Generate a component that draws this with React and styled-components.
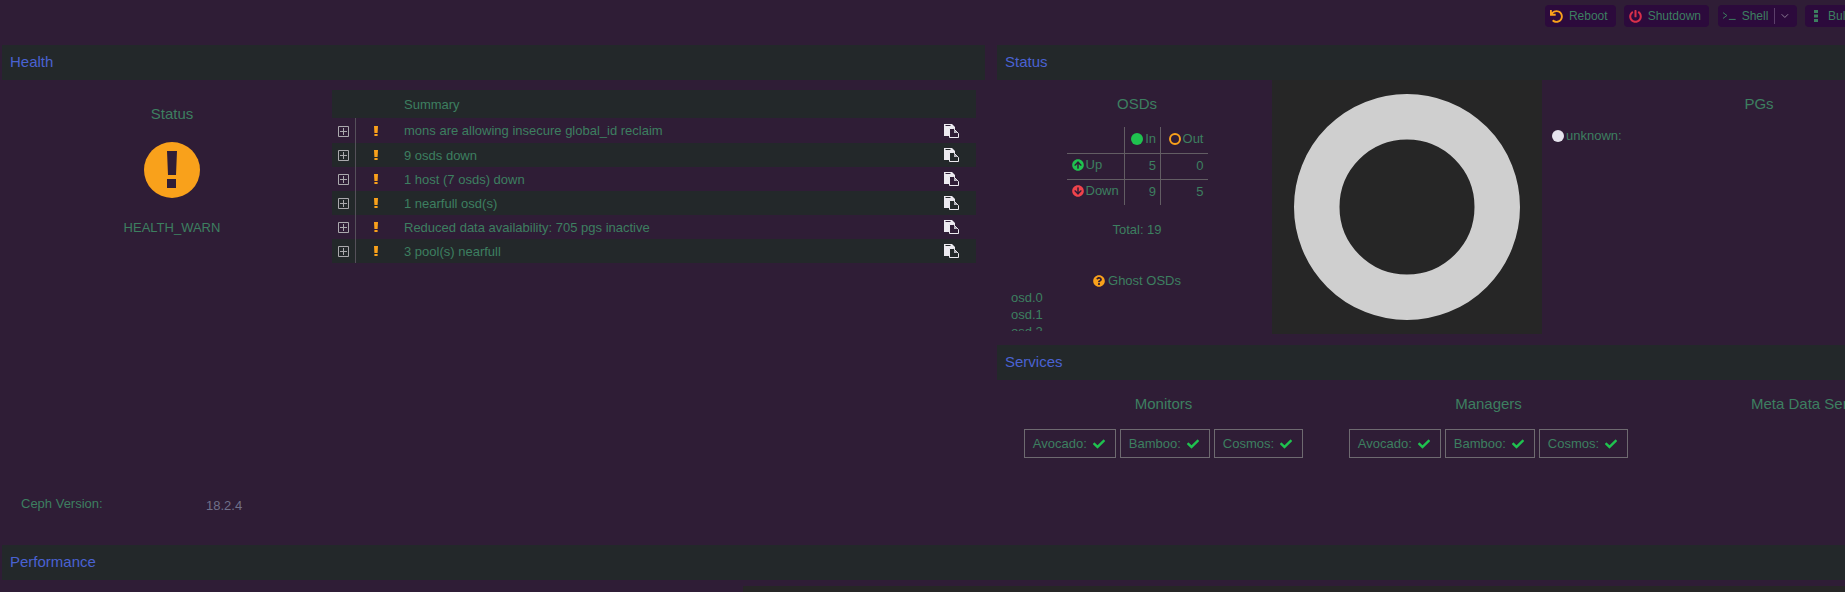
import React from "react";
import styled, { createGlobalStyle } from "styled-components";
import {
  FaUndo,
  FaPowerOff,
  FaCheck,
  FaArrowCircleUp,
  FaArrowCircleDown,
  FaQuestionCircle,
} from "react-icons/fa";
import { FiChevronDown } from "react-icons/fi";

const BG = "#2f1d36";
const BAR = "#23282a";
const GREEN = "#3d7f60";
const ORANGE = "#f9a11b";

const GlobalStyle = createGlobalStyle`
  html, body {
    margin: 0;
    height: 592px;
    overflow: hidden;
    background: ${BG};
  }
  body {
    font-family: "Liberation Sans", Arial, sans-serif;
    font-size: 13px;
    color: ${GREEN};
  }
`;

const Page = styled.div`
  width: 1981px;
  height: 592px;
  padding-left: 2px;
  overflow: hidden;
`;

const Toolbar = styled.div`
  height: 45px;
  padding-top: 5px;
  box-sizing: border-box;
  display: flex;
  justify-content: flex-end;
  gap: 8px;
`;

const ActionButton = styled.div`
  height: 22px;
  padding: ${(p) => p.$padding || "0 8px 0 5px"};
  margin-left: ${(p) => p.$offset || 0};
  display: flex;
  align-items: center;
  gap: ${(p) => p.$gap || "6px"};
  border-radius: 4px;
  background: #2c0a3c;
  font-size: 12px;
  color: ${GREEN};
  width: ${(p) => p.$width || "auto"};
  box-sizing: border-box;
`;

const ShellDivider = styled.span`
  width: 1px;
  height: 16px;
  margin-right: -2px;
  background: #5b3f6a;
`;

const Columns = styled.div`
  display: grid;
  grid-template-columns: 983px 984px;
  column-gap: 12px;
  height: 500px;
`;

const Column = styled.section`
  display: flex;
  flex-direction: column;
  min-width: 0;
`;

const SectionBar = styled.h2`
  flex: none;
  height: 35px;
  box-sizing: border-box;
  margin: ${(p) => p.$margin || 0};
  padding: 0 0 2px 8px;
  display: flex;
  align-items: center;
  background: ${BAR};
  color: #4a62d2;
  font-size: 15px;
  font-weight: 400;
`;

const HealthBody = styled.div`
  flex: 1;
  display: grid;
  grid-template-columns: 320px 644px;
  padding-left: 10px;
  align-content: start;
`;

const HealthStatus = styled.div`
  display: flex;
  flex-direction: column;
  align-items: center;
  padding-top: 24px;
`;

const PanelTitle = styled.h3`
  margin: 0;
  font-size: 15px;
  font-weight: 400;
  line-height: 19px;
  text-align: center;
`;

const StatusIcon = styled.svg`
  display: block;
  width: 56px;
  height: 56px;
  margin: 19px 0 0;
`;

const HealthLabel = styled.div`
  margin-top: 21px;
  line-height: 17px;
`;

const SummaryTable = styled.table`
  margin-top: 10px;
  width: 644px;
  border-collapse: collapse;
  table-layout: fixed;
  align-self: start;
`;

const HeadCell = styled.th`
  height: 28px;
  padding: 0 0 0 ${(p) => p.$pad || 0};
  background: ${BAR};
  text-align: left;
  font-weight: 400;
  line-height: 17px;
`;

const Row = styled.tr`
  height: 24px;
  background: ${(p) => (p.$striped ? BAR : "transparent")};
  &:first-child {
    height: 25px;
  }
`;

const Cell = styled.td`
  padding: 0 0 0 ${(p) => p.$pad || 0};
  border-right: ${(p) => (p.$rule ? "1px solid #55505a" : "none")};
  line-height: 17px;
  vertical-align: middle;
`;

const BlockIcon = styled.svg`
  display: block;
  margin: ${(p) => p.$margin || 0};
`;

const VersionLine = styled.div`
  display: flex;
  line-height: 16px;
  padding: 0 0 31px 19px;
  margin-top: auto;
`;

const VersionLabel = styled.span`
  width: 185px;
`;

const VersionValue = styled.span`
  color: #70708a;
  margin-top: 2px;
`;

const StatusGrid = styled.div`
  height: 254px;
  flex: none;
  display: grid;
  grid-template-columns: 275px 270px 1fr;
  grid-template-rows: 254px;
`;

const OsdPanel = styled.div`
  padding: 14px 0 0 5px;
  display: flex;
  flex-direction: column;
  align-items: center;
  min-width: 0;
  min-height: 0;
  overflow: hidden;
`;

const OsdTable = styled.table`
  margin-top: 14px;
  border-collapse: collapse;
  width: 141px;
  table-layout: fixed;
`;

const OsdRow = styled.tr`
  height: 26px;
`;

const OsdCell = styled.td`
  padding: 0 4px 0 5px;
  box-sizing: border-box;
  text-align: ${(p) => p.$align || "right"};
  white-space: nowrap;
  border: 1px solid #625d63;
  line-height: 16px;
  &:first-child {
    border-left: none;
  }
  &:last-child {
    border-right: none;
  }
  tr:first-child > & {
    border-top: none;
  }
  tr:last-child > & {
    border-bottom: none;
  }
`;

const OsdIcon = styled.span`
  display: inline-flex;
  align-items: center;
  gap: 2px;
  svg {
    color: ${(p) => p.$color};
  }
`;

const FilledDot = styled.span`
  display: inline-block;
  width: 12px;
  height: 12px;
  border-radius: 50%;
  background: ${(p) => p.$color};
`;

const RingDot = styled.span`
  display: inline-block;
  width: 12px;
  height: 12px;
  box-sizing: border-box;
  border-radius: 50%;
  border: 2px solid ${ORANGE};
`;

const Total = styled.div`
  margin-top: 16px;
  line-height: 17px;
`;

const GhostTitle = styled.div`
  margin-top: 34px;
  line-height: 17px;
  display: flex;
  align-items: center;
  gap: 3px;
  svg {
    color: ${ORANGE};
  }
`;

const GhostList = styled.div`
  align-self: stretch;
  margin-left: 9px;
  height: 42px;
  flex: none;
  overflow: hidden;
  line-height: 17px;
`;

const DonutPanel = styled.div`
  background: #262626;
  display: flex;
  align-items: center;
  justify-content: center;
`;

const PgPanel = styled.div`
  padding: 14px 15px 0 10px;
`;

const LegendItem = styled.div`
  margin-top: 14px;
  display: flex;
  align-items: center;
  gap: 2px;
  line-height: 17px;
`;

const ServicesGrid = styled.div`
  display: grid;
  grid-template-columns: repeat(3, 325px);
  padding-left: 4px;
`;

const ServiceGroup = styled.div`
  padding-top: 14px;
  display: flex;
  flex-direction: column;
  align-items: center;
`;

const NodeList = styled.div`
  margin-top: 16px;
  display: flex;
  gap: 4px;
`;

const NodeBadge = styled.div`
  height: 29px;
  padding: 0 10px 0 8px;
  box-sizing: border-box;
  display: flex;
  align-items: center;
  gap: 6px;
  border: 1px solid #6e6a70;
  white-space: nowrap;
  svg {
    color: #1fc24f;
  }
`;

const BottomPanel = styled.div`
  margin: 6px 0 0 741px;
  height: 40px;
  background: #262626;
`;

const alerts = [
  "mons are allowing insecure global_id reclaim",
  "9 osds down",
  "1 host (7 osds) down",
  "1 nearfull osd(s)",
  "Reduced data availability: 705 pgs inactive",
  "3 pool(s) nearfull",
];

const nodes = ["Avocado", "Bamboo", "Cosmos"];

function ExpandIcon() {
  return (
    <BlockIcon $margin="1px auto 0" width="11" height="11" viewBox="0 0 11 11">
      <path d="M.5.5h10v10H.5zM5.500 2v7M2 5.500h7" fill="none" stroke="#aaa9ad" />
    </BlockIcon>
  );
}

function WarnMark() {
  return (
    <BlockIcon $margin="0 auto" width="4" height="10" viewBox="0 0 4 10">
      <path d="M0 0h4l-.4 7H.4zM.4 8h3.200v2H.4z" fill={ORANGE} />
    </BlockIcon>
  );
}

function CopyIcon({ background }) {
  return (
    <BlockIcon width="15" height="14" viewBox="0 0 15 14">
      <path d="M0 0h8l3 3v9H0z" fill="#eceaf0" />
      <path d="M1.500 1.500h5" stroke={background} />
      <path d="M5.500 4.500h4l5 5v4h-9z" fill={background} stroke="#eceaf0" />
      <path d="M10 5.500v3.500h3.500z" fill="#b9b7c0" />
    </BlockIcon>
  );
}

function ShellIcon() {
  return (
    <BlockIcon width="13" height="8" viewBox="0 0 13 8">
      <path d="M0 .5l4 3-4 3M6 7.500h7" fill="none" stroke={GREEN} />
    </BlockIcon>
  );
}

function KebabIcon() {
  return (
    <BlockIcon width="4" height="12" viewBox="0 0 4 12">
      <path d="M0 0h4v3H0zM0 4.500h4v3H0zM0 9h4v3H0z" fill={GREEN} />
    </BlockIcon>
  );
}

function NodeGroup({ title, names = [] }) {
  return (
    <ServiceGroup>
      <PanelTitle>{title}</PanelTitle>
      <NodeList>
        {names.map((name) => (
          <NodeBadge key={name}>
            {name}:
            <FaCheck size={12} />
          </NodeBadge>
        ))}
      </NodeList>
    </ServiceGroup>
  );
}

export default function App() {
  return (
    <>
      <GlobalStyle />
      <Page>
        <Toolbar>
          <ActionButton>
            <FaUndo size={13} color={ORANGE} />
            Reboot
          </ActionButton>
          <ActionButton>
            <FaPowerOff size={13} color="#d8304a" />
            Shutdown
          </ActionButton>
          <ActionButton $offset="1px" $padding="0 6px 0 5px" $width="79px">
            <ShellIcon />
            Shell
            <ShellDivider />
            <FiChevronDown size={12} color="#8d7f96" />
          </ActionButton>
          <ActionButton $width="178px" $padding="0 8px 0 9px" $gap="10px">
            <KebabIcon />
            Bulk Actions
          </ActionButton>
        </Toolbar>
        <Columns>
          <Column>
            <SectionBar>Health</SectionBar>
            <HealthBody>
              <HealthStatus>
                <PanelTitle>Status</PanelTitle>
                <StatusIcon viewBox="0 0 56 56">
                  <circle cx="28" cy="28" r="28" fill={ORANGE} />
                  <path d="M23 9h10l-1 24h-8zM23 37h9v9h-9z" fill={BG} />
                </StatusIcon>
                <HealthLabel>HEALTH_WARN</HealthLabel>
              </HealthStatus>
              <SummaryTable>
                <colgroup>
                  <col width="23" />
                  <col width="41" />
                  <col />
                  <col width="32" />
                </colgroup>
                <thead>
                  <tr>
                    <HeadCell />
                    <HeadCell />
                    <HeadCell $pad="8px">Summary</HeadCell>
                    <HeadCell />
                  </tr>
                </thead>
                <tbody>
                  {alerts.map((text, i) => (
                    <Row key={text} $striped={i % 2 === 1}>
                      <Cell $rule>
                        <ExpandIcon />
                      </Cell>
                      <Cell>
                        <WarnMark />
                      </Cell>
                      <Cell $pad="8px">{text}</Cell>
                      <Cell>
                        <CopyIcon background={i % 2 === 1 ? BAR : BG} />
                      </Cell>
                    </Row>
                  ))}
                </tbody>
              </SummaryTable>
            </HealthBody>
            <VersionLine>
              <VersionLabel>Ceph Version:</VersionLabel>
              <VersionValue>18.2.4</VersionValue>
            </VersionLine>
          </Column>
          <Column>
            <SectionBar>Status</SectionBar>
            <StatusGrid>
              <OsdPanel>
                <PanelTitle>OSDs</PanelTitle>
                <OsdTable>
                  <colgroup>
                    <col width="58" />
                    <col width="36" />
                    <col width="47" />
                  </colgroup>
                  <tbody>
                    <OsdRow>
                      <OsdCell />
                      <OsdCell>
                        <OsdIcon>
                          <FilledDot $color="#1fc24f" />
                          In
                        </OsdIcon>
                      </OsdCell>
                      <OsdCell>
                        <OsdIcon>
                          <RingDot />
                          Out
                        </OsdIcon>
                      </OsdCell>
                    </OsdRow>
                    <OsdRow>
                      <OsdCell $align="left">
                        <OsdIcon $color="#1fc24f">
                          <FaArrowCircleUp size={12} />
                          Up
                        </OsdIcon>
                      </OsdCell>
                      <OsdCell>5</OsdCell>
                      <OsdCell>0</OsdCell>
                    </OsdRow>
                    <OsdRow>
                      <OsdCell $align="left">
                        <OsdIcon $color="#f0434c">
                          <FaArrowCircleDown size={12} />
                          Down
                        </OsdIcon>
                      </OsdCell>
                      <OsdCell>9</OsdCell>
                      <OsdCell>5</OsdCell>
                    </OsdRow>
                  </tbody>
                </OsdTable>
                <Total>Total: 19</Total>
                <GhostTitle>
                  <FaQuestionCircle size={12} />
                  Ghost OSDs
                </GhostTitle>
                <GhostList>
                  <div>osd.0</div>
                  <div>osd.1</div>
                  <div>osd.2</div>
                </GhostList>
              </OsdPanel>
              <DonutPanel>
                <svg width="226" height="226" viewBox="0 0 226 226">
                  <circle
                    cx="113"
                    cy="113"
                    r="90.250"
                    fill="none"
                    stroke="#cfcfcf"
                    strokeWidth="45.500"
                  />
                </svg>
              </DonutPanel>
              <PgPanel>
                <PanelTitle>PGs</PanelTitle>
                <LegendItem>
                  <FilledDot $color="#e6e4ee" />
                  unknown:
                </LegendItem>
              </PgPanel>
            </StatusGrid>
            <SectionBar $margin="11px 0 0">Services</SectionBar>
            <ServicesGrid>
              <NodeGroup title="Monitors" names={nodes} />
              <NodeGroup title="Managers" names={nodes} />
              <NodeGroup title="Meta Data Servers" />
            </ServicesGrid>
          </Column>
        </Columns>
        <SectionBar>Performance</SectionBar>
        <BottomPanel />
      </Page>
    </>
  );
}
